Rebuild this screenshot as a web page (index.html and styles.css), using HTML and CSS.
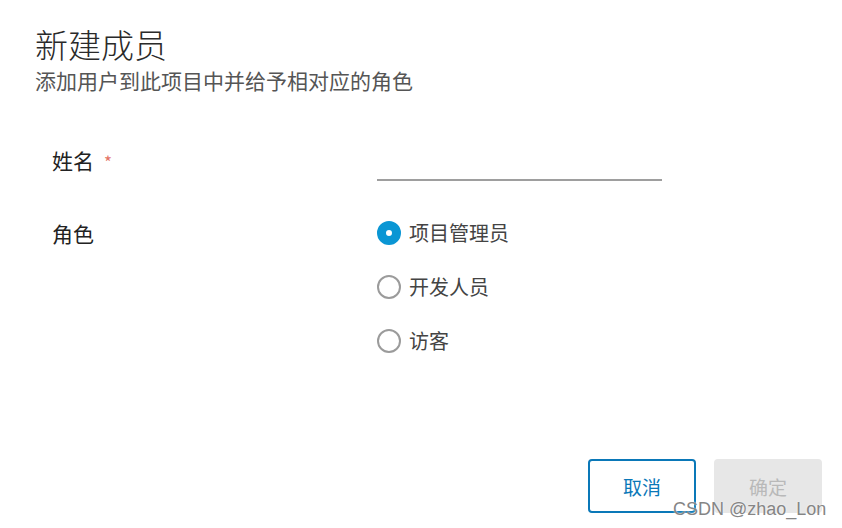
FILE: index.html
```html
<!DOCTYPE html>
<html lang="zh-CN">
<head>
<meta charset="utf-8">
<title>新建成员</title>
<link rel="stylesheet" href="styles.css">
</head>
<body>
<div class="dialog">
  <header class="dialog-head">
    <h1 class="dialog-title">新建成员</h1>
    <p class="dialog-sub">添加用户到此项目中并给予相对应的角色</p>
  </header>
  <form class="form">
    <div class="row row-name">
      <label class="label">姓名<span class="req">*</span></label>
      <div class="field"><input class="text-input" type="text"></div>
    </div>
    <div class="row row-role">
      <div class="label label-role">角色</div>
      <div class="field radios">
        <label class="radio"><span class="dot checked"></span><span class="radio-text">项目管理员</span></label>
        <label class="radio"><span class="dot"></span><span class="radio-text">开发人员</span></label>
        <label class="radio"><span class="dot"></span><span class="radio-text">访客</span></label>
      </div>
    </div>
  </form>
  <footer class="footer">
    <button class="btn btn-cancel" type="button">取消</button>
    <button class="btn btn-ok" type="button" disabled>确定</button>
  </footer>
  <div class="watermark">CSDN @zhao_Lon</div>
</div>
</body>
</html>
```

FILE: styles.css
```css
html, body {
  margin: 0;
  padding: 0;
  background: #ffffff;
}
body {
  width: 842px;
  height: 528px;
  overflow: hidden;
  font-family: "Noto Sans CJK SC", "Noto Sans", sans-serif;
}
.dialog {
  position: relative;
  width: 842px;
  height: 528px;
}
.dialog-head {
  padding: 24px 0 0 35px;
}
.dialog-title {
  margin: 0;
  font-size: 33px;
  line-height: 40px;
  font-weight: 300;
  color: #2a2a2a;
}
.dialog-sub {
  margin: 1px 0 0;
  font-size: 21px;
  line-height: 30px;
  font-weight: 400;
  color: #555555;
}
.form {
  padding-left: 52px;
  margin: 51px 0 0;
}
.row {
  display: flex;
  align-items: flex-start;
}
.label {
  width: 325px;
  font-size: 21px;
  line-height: 28px;
  color: #222222;
  display: flex;
  align-items: flex-start;
}
.req {
  color: #e47466;
  font-size: 17px;
  line-height: 20px;
  margin-left: 10px;
  padding-top: 6px;
}
.field {
  width: 285px;
}
.text-input {
  display: block;
  width: 285px;
  height: 35px;
  box-sizing: border-box;
  border: none;
  border-bottom: 2px solid #9e9e9e;
  outline: none;
  padding: 0;
  background: transparent;
  font: inherit;
}
.row-role {
  margin-top: 25px;
}
.label-role {
  padding-top: 13px;
}
.radios {
  display: flex;
  flex-direction: column;
}
.radio {
  height: 54px;
  display: flex;
  align-items: center;
  gap: 8px;
}
.dot {
  width: 24px;
  height: 24px;
  box-sizing: border-box;
  border: 2px solid #9b9b9b;
  border-radius: 50%;
  flex: none;
}
.dot.checked {
  border: 9px solid #0a96d4;
  background: #ffffff;
}
.radio-text {
  font-size: 20px;
  line-height: 28px;
  color: #444444;
}
.footer {
  display: flex;
  justify-content: flex-end;
  gap: 18px;
  padding-right: 20px;
  margin-top: 91px;
}
.btn {
  width: 108px;
  height: 54px;
  box-sizing: border-box;
  border-radius: 4px;
  font-family: "Noto Sans CJK SC", "Noto Sans", sans-serif;
  font-size: 19px;
  padding: 0;
}
.btn-cancel {
  background: #ffffff;
  border: 2px solid #0a78b8;
  color: #0a78b8;
}
.btn-ok {
  background: #e7e7e7;
  border: none;
  color: #b9b9b9;
}
.watermark {
  position: absolute;
  left: 673px;
  top: 499px;
  font-family: "Liberation Sans", Arial, sans-serif;
  font-size: 18px;
  color: #858585;
  text-shadow: 0 0 2px #ffffff;
  white-space: nowrap;
}
```
